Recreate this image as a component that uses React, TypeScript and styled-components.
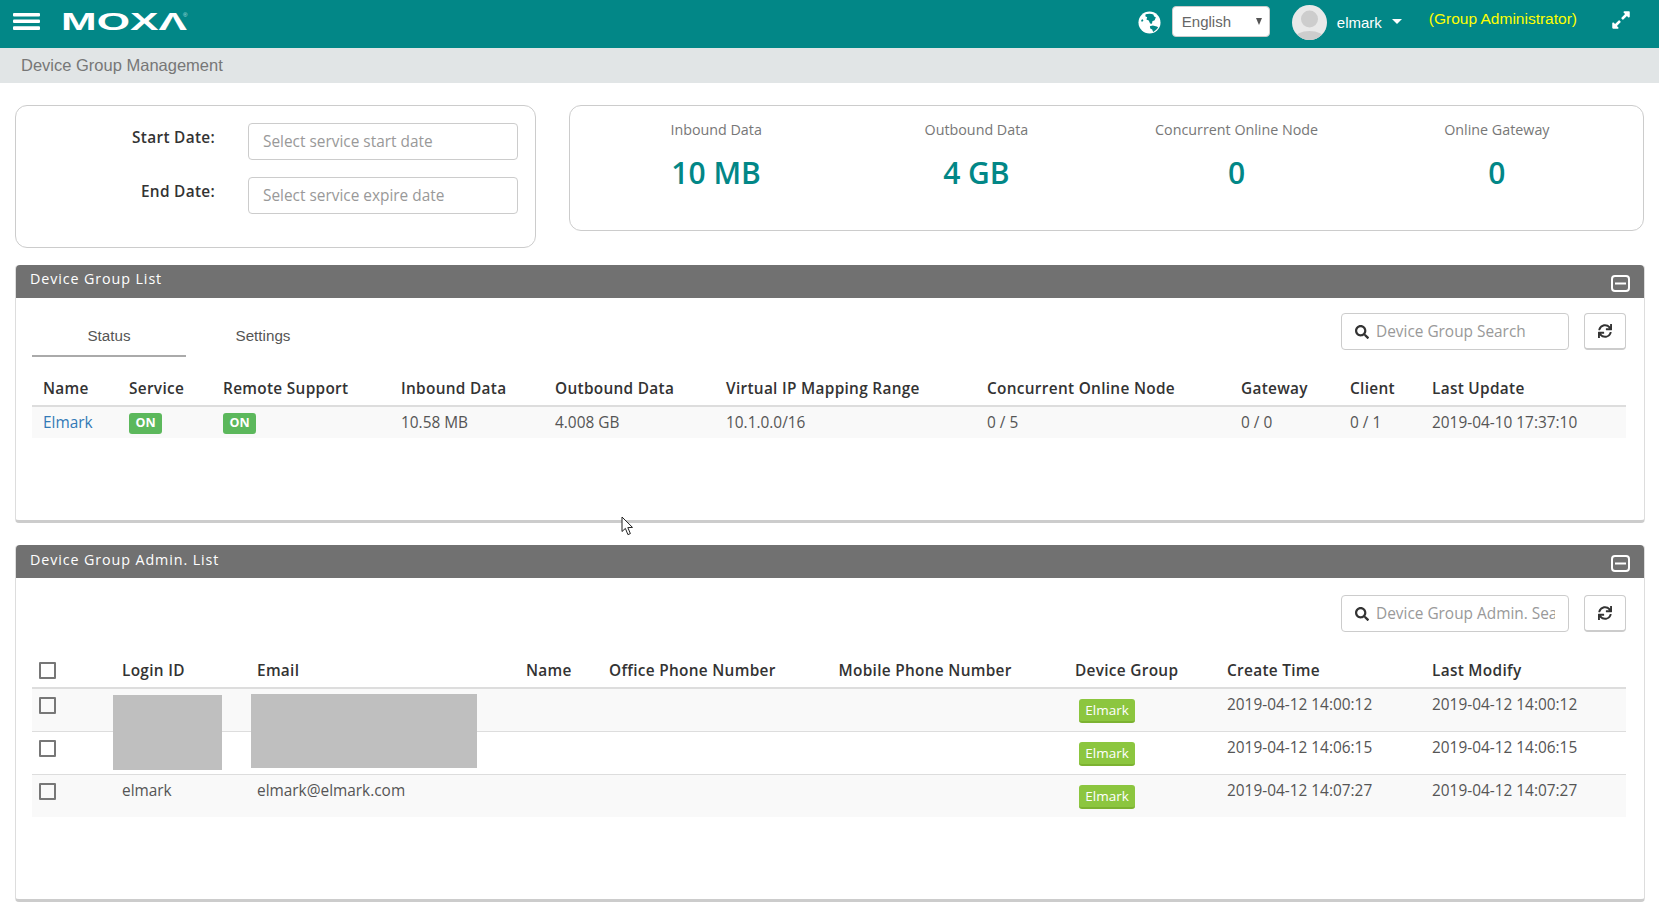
import styled, { createGlobalStyle } from 'styled-components'
import { FaExpandAlt, FaSearch, FaSync } from 'react-icons/fa'

const teal = '#028787'
const sans = '"Open Sans", "Liberation Sans", sans-serif'
const arial = '"Liberation Sans", Arial, sans-serif'

const GlobalStyle = createGlobalStyle`
    html, body {
        margin: 0;
        padding: 0;
        background: #fff;
        font-family: ${sans};
        overflow: hidden;
    }
`

const statusColumns = [86, 94, 178, 154, 171, 261, 254, 109, 82, 205]
const adminColumns = [79, 135, 269, 83, 229.5, 236.5, 152, 205, 205]

const stats = [
    { label: 'Inbound Data', value: '10 MB' },
    { label: 'Outbound Data', value: '4 GB' },
    { label: 'Concurrent Online Node', value: '0' },
    { label: 'Online Gateway', value: '0' },
]

const admins = [
    { login: '', email: '', created: '2019-04-12 14:00:12' },
    { login: '', email: '', created: '2019-04-12 14:06:15' },
    { login: 'elmark', email: 'elmark@elmark.com', created: '2019-04-12 14:07:27' },
]

function MenuIcon() {
    return (
        <MenuSvg viewBox="0 0 27 18">
            <rect y="0" width="27" height="3.6" rx="1" fill="#fff" />
            <rect y="6.4" width="27" height="3.6" rx="1" fill="#fff" />
            <rect y="13.2" width="27" height="3.8" rx="1" fill="#fff" />
        </MenuSvg>
    )
}

function MoxaLogo() {
    return (
        <LogoSvg viewBox="0 0 130 30" aria-label="MOXA">
            <text x="0" y="21" fill="#fff" fontFamily={arial} fontWeight="700" fontSize="24" textLength="126" lengthAdjust="spacingAndGlyphs">MOXΛ</text>
            <text x="122" y="8" fill="#bfe0e0" fontFamily={arial} fontSize="6">®</text>
        </LogoSvg>
    )
}

function GlobeIcon() {
    return (
        <GlobeSvg viewBox="0 0 24 24">
            <circle cx="12" cy="12" r="11.5" fill="#fff" />
            <path d="M8 3.5 C10.5 2.6 14 2.6 16 3.6 L16.8 5.8 L18.6 6.6 L17.4 9.6 L15 10.6 L14.6 13.4 L12.6 13 L11.2 9.8 L8.8 8.8 L9.6 6.6 L7.6 5.4 Z" fill={teal} />
            <path d="M12.4 16 L15.4 15.2 L19.6 16.2 L21 17 C19.8 19 17.8 20.8 15.8 21.8 L14.8 19.4 L12.8 18.2 Z" fill={teal} />
            <path d="M3.2 9.4 L5 8.6 L5.6 10.2 L4 11.6 Z" fill={teal} />
        </GlobeSvg>
    )
}

function Avatar() {
    return (
        <AvatarSvg viewBox="0 0 35 35">
            <defs>
                <clipPath id="avatar-clip"><circle cx="17.5" cy="17.5" r="17.5" /></clipPath>
            </defs>
            <g clipPath="url(#avatar-clip)">
                <rect width="35" height="35" fill="#e9e9e9" />
                <circle cx="17.5" cy="14" r="8.5" fill="#cdcdcd" />
                <ellipse cx="17.5" cy="34" rx="15" ry="8" fill="#cdcdcd" />
            </g>
        </AvatarSvg>
    )
}

function CollapseIcon() {
    return (
        <CollapseSvg viewBox="0 0 19 17">
            <rect x="1" y="1" width="17" height="15" rx="3" fill="none" stroke="#fff" strokeWidth="2" />
            <rect x="4" y="7.5" width="11" height="2" fill="#fff" />
        </CollapseSvg>
    )
}

function MouseCursor() {
    return (
        <CursorSvg viewBox="0 0 13 20">
            <path d="M1 1 L1 15.5 L4.4 12.4 L6.9 18.6 L9.4 17.6 L6.8 11.6 L11.5 11.4 Z" fill="#fff" stroke="#222" strokeWidth="1" strokeLinejoin="round" />
        </CursorSvg>
    )
}

function SearchTools({ placeholder }: { placeholder: string }) {
    return (
        <Tools>
            <SearchBox>
                <FaSearch size={14} color="#333" />
                <SearchInput placeholder={placeholder} />
            </SearchBox>
            <RefreshButton><FaSync size={14} color="#333" /></RefreshButton>
        </Tools>
    )
}

export default function App() {
    return (
        <>
            <GlobalStyle />
            <TopBar>
                <MenuIcon />
                <MoxaLogo />
                <TopRight>
                    <GlobeIcon />
                    <LanguageSelect>English<SelectArrow /></LanguageSelect>
                    <Avatar />
                    <UserName>elmark</UserName>
                    <UserCaret />
                    <RoleText>(Group Administrator)</RoleText>
                    <ExpandIcon><FaExpandAlt size={20} /></ExpandIcon>
                </TopRight>
            </TopBar>
            <Breadcrumb>Device Group Management</Breadcrumb>
            <Content>
                <TopCards>
                    <DateCard>
                        <DateLabel>Start Date:</DateLabel>
                        <DateInput placeholder="Select service start date" />
                        <DateLabel>End Date:</DateLabel>
                        <DateInput placeholder="Select service expire date" />
                    </DateCard>
                    <StatsCard>
                        {stats.map((stat) => (
                            <Stat key={stat.label}>
                                <StatLabel>{stat.label}</StatLabel>
                                <StatValue>{stat.value}</StatValue>
                            </Stat>
                        ))}
                    </StatsCard>
                </TopCards>

                <Panel $height={258}>
                    <PanelHeader>
                        <PanelTitle>Device Group List</PanelTitle>
                        <CollapseIcon />
                    </PanelHeader>
                    <PanelBody $top={15}>
                        <Toolbar>
                            <Tabs>
                                <Tab $active>Status</Tab>
                                <Tab>Settings</Tab>
                            </Tabs>
                            <SearchTools placeholder="Device Group Search" />
                        </Toolbar>
                        <Table>
                            <colgroup>{statusColumns.map((w, i) => <Col key={i} $w={w} />)}</colgroup>
                            <thead>
                                <tr>
                                    <Th>Name</Th>
                                    <Th>Service</Th>
                                    <Th>Remote Support</Th>
                                    <Th>Inbound Data</Th>
                                    <Th>Outbound Data</Th>
                                    <Th>Virtual IP Mapping Range</Th>
                                    <Th>Concurrent Online Node</Th>
                                    <Th>Gateway</Th>
                                    <Th>Client</Th>
                                    <Th>Last Update</Th>
                                </tr>
                            </thead>
                            <tbody>
                                <StatusRow>
                                    <Td><NameLink>Elmark</NameLink></Td>
                                    <Td><OnBadge>ON</OnBadge></Td>
                                    <Td><OnBadge>ON</OnBadge></Td>
                                    <Td>10.58 MB</Td>
                                    <Td>4.008 GB</Td>
                                    <Td>10.1.0.0/16</Td>
                                    <Td>0 / 5</Td>
                                    <Td>0 / 0</Td>
                                    <Td>0 / 1</Td>
                                    <Td>2019-04-10 17:37:10</Td>
                                </StatusRow>
                            </tbody>
                        </Table>
                    </PanelBody>
                    <MouseCursor />
                </Panel>

                <Panel $height={357}>
                    <PanelHeader>
                        <PanelTitle $drop>Device Group Admin. List</PanelTitle>
                        <CollapseIcon />
                    </PanelHeader>
                    <PanelBody $top={17}>
                        <Toolbar>
                            <span />
                            <SearchTools placeholder="Device Group Admin. Search" />
                        </Toolbar>
                        <TableWrap>
                            <Table>
                                <colgroup>{adminColumns.map((w, i) => <Col key={i} $w={w} />)}</colgroup>
                                <thead>
                                    <tr>
                                        <Th><HeadCheckBox /></Th>
                                        <Th>Login ID</Th>
                                        <Th>Email</Th>
                                        <Th>Name</Th>
                                        <Th>Office Phone Number</Th>
                                        <Th>Mobile Phone Number</Th>
                                        <Th>Device Group</Th>
                                        <Th>Create Time</Th>
                                        <Th>Last Modify</Th>
                                    </tr>
                                </thead>
                                <tbody>
                                    {admins.map((admin) => (
                                        <AdminRow key={admin.created}>
                                            <AdminTd><CheckBox /></AdminTd>
                                            <AdminTd>{admin.login}</AdminTd>
                                            <AdminTd>{admin.email}</AdminTd>
                                            <AdminTd />
                                            <AdminTd />
                                            <AdminTd />
                                            <AdminTd><GroupTag>Elmark</GroupTag></AdminTd>
                                            <AdminTd>{admin.created}</AdminTd>
                                            <AdminTd>{admin.created}</AdminTd>
                                        </AdminRow>
                                    ))}
                                </tbody>
                            </Table>
                            <Redaction $left={81} $top={41} $w={109} $h={75} />
                            <Redaction $left={219} $top={40} $w={226} $h={74} />
                        </TableWrap>
                    </PanelBody>
                </Panel>
            </Content>
        </>
    )
}

const TopBar = styled.header`
    display: flex;
    align-items: center;
    height: 48px;
    background: ${teal};
    color: #fff;
`

const MenuSvg = styled.svg`
    width: 27px;
    height: 18px;
    margin: -4px 0 0 13px;
`

const LogoSvg = styled.svg`
    width: 130px;
    height: 30px;
    margin-left: 21px;
`

const TopRight = styled.div`
    display: flex;
    align-items: center;
    margin: 0 0 4px auto;
`

const GlobeSvg = styled.svg`
    width: 23px;
    height: 23px;
    margin-right: 11px;
`

const LanguageSelect = styled.div`
    position: relative;
    display: flex;
    align-items: center;
    box-sizing: border-box;
    width: 98px;
    height: 31px;
    margin-top: -1px;
    padding-left: 9px;
    background: #fff;
    border: 1px solid #ccc;
    border-radius: 4px;
    color: #666;
    font: 15px ${arial};
`

const SelectArrow = styled.span`
    position: absolute;
    right: 7px;
    top: 11px;
    width: 0;
    height: 0;
    border-left: 3px solid transparent;
    border-right: 3px solid transparent;
    border-top: 7px solid #555;
`

const AvatarSvg = styled.svg`
    width: 35px;
    height: 35px;
    margin: 1px 0 0 22px;
`

const UserName = styled.span`
    margin: 0 0 0 10px;
    font: 15px ${arial};
`

const UserCaret = styled.span`
    width: 0;
    height: 0;
    margin: -2px 27px 0 10px;
    border-left: 5px solid transparent;
    border-right: 5px solid transparent;
    border-top: 5px solid #fff;
`

const RoleText = styled.span`
    margin-top: -6px;
    color: #ff0;
    font: 15.5px ${arial};
`

const ExpandIcon = styled.div`
    display: flex;
    margin: -5px 28px 0 34px;
    color: #fff;
`

const Breadcrumb = styled.div`
    box-sizing: border-box;
    height: 35px;
    padding: 7px 0 0 21px;
    background: #e1e5e6;
    color: #777;
    font: 16.5px/20px ${arial};
`

const Content = styled.main`
    padding: 22px 15px 0;
`

const TopCards = styled.div`
    display: flex;
    align-items: flex-start;
    gap: 33px;
    margin-bottom: 17px;
`

const DateCard = styled.section`
    display: grid;
    grid-template-columns: 199px 270px;
    column-gap: 33px;
    row-gap: 17px;
    box-sizing: border-box;
    width: 521px;
    height: 143px;
    padding-top: 17px;
    border: 1px solid #ccc;
    border-radius: 12px;
    align-content: start;
`

const DateLabel = styled.label`
    padding-top: 5px;
    color: #333;
    font-size: 15.4px;
    font-weight: 600;
    letter-spacing: 0.3px;
    line-height: 20px;
    text-align: right;
`

const DateInput = styled.input`
    box-sizing: border-box;
    width: 270px;
    height: 37px;
    padding: 0 14px;
    border: 1px solid #ccc;
    border-radius: 4px;
    font-family: ${sans};
    font-size: 15.4px;
    outline: none;

    &::placeholder {
        color: #999;
        opacity: 1;
    }
`

const StatsCard = styled.section`
    flex: 1;
    display: grid;
    grid-template-columns: repeat(4, 1fr);
    box-sizing: border-box;
    height: 126px;
    padding: 0 16px;
    border: 1px solid #ccc;
    border-radius: 12px;
`

const Stat = styled.div`
    text-align: center;
`

const StatLabel = styled.div`
    margin-top: 14px;
    color: #777;
    font-size: 14.3px;
    line-height: 20px;
`

const StatValue = styled.div`
    margin-top: 13px;
    color: ${teal};
    font-size: 30px;
    font-weight: 600;
    line-height: 40px;
`

const Panel = styled.section<{ $height: number }>`
    position: relative;
    box-sizing: border-box;
    height: ${(props) => props.$height}px;
    margin: 0 -1px 22px 0;
    border: 1px solid #ddd;
    border-top: none;
    border-bottom: 3px solid #ccc;
    border-radius: 4px;
`

const PanelHeader = styled.div`
    display: flex;
    align-items: flex-start;
    justify-content: space-between;
    box-sizing: border-box;
    height: 33px;
    padding: 3px 14px 0 14px;
    background: #717171;
    border-radius: 4px 4px 0 0;
`

const PanelTitle = styled.h2<{ $drop?: boolean }>`
    margin: ${(props) => (props.$drop ? '1px' : '0')} 0 0;
    color: #fff;
    font-size: 14.3px;
    font-weight: 400;
    letter-spacing: 0.9px;
    line-height: 22px;
`

const CollapseSvg = styled.svg`
    width: 19px;
    height: 17px;
    margin-top: 7px;
`

const PanelBody = styled.div<{ $top: number }>`
    padding: ${(props) => props.$top}px 16px 0;
`

const Toolbar = styled.div`
    display: flex;
    align-items: flex-start;
    justify-content: space-between;
    width: 1594px;
    height: 44px;
    margin-bottom: 15px;
`

const Tabs = styled.div`
    display: flex;
`

const Tab = styled.div<{ $active?: boolean }>`
    box-sizing: border-box;
    width: 154px;
    height: 44px;
    padding-top: 13px;
    border-bottom: 2px solid ${(props) => (props.$active ? '#aaa' : 'transparent')};
    color: #555;
    font: 15.2px/20px ${arial};
    text-align: center;
`

const Tools = styled.div`
    display: flex;
    align-items: flex-start;
    gap: 15px;
`

const SearchBox = styled.div`
    display: flex;
    align-items: center;
    box-sizing: border-box;
    width: 228px;
    height: 37px;
    padding-left: 13px;
    border: 1px solid #ccc;
    border-radius: 4px;
`

const SearchInput = styled.input`
    width: 179px;
    margin-left: 7px;
    padding: 0;
    border: none;
    color: #555;
    font-family: ${sans};
    font-size: 15.4px;
    outline: none;

    &::placeholder {
        color: #999;
        opacity: 1;
    }
`

const RefreshButton = styled.div`
    display: flex;
    align-items: center;
    justify-content: center;
    box-sizing: border-box;
    width: 42px;
    height: 37px;
    border: 1px solid #ccc;
    border-bottom-width: 2px;
    border-radius: 4px;
`

const TableWrap = styled.div`
    position: relative;
`

const Table = styled.table`
    width: 1594px;
    border-collapse: collapse;
    table-layout: fixed;
    color: #555;
    font-size: 15.4px;
`

const Col = styled.col<{ $w: number }>`
    width: ${(props) => props.$w}px;
`

const Th = styled.th`
    box-sizing: border-box;
    height: 34px;
    padding: 0 0 0 11px;
    border-bottom: 2px solid #ddd;
    color: #333;
    font-weight: 600;
    letter-spacing: 0.3px;
    line-height: 20px;
    text-align: left;
    white-space: nowrap;
    vertical-align: middle;
`

const StatusRow = styled.tr`
    height: 32px;
    background: #f9f9f9;
`

const Td = styled.td`
    padding: 0 0 0 11px;
    vertical-align: middle;
    white-space: nowrap;
`

const NameLink = styled.a`
    color: #337ab7;
`

const OnBadge = styled.span`
    display: inline-block;
    width: 33px;
    height: 21px;
    background: #5cb85c;
    border-radius: 3px;
    color: #fff;
    font-size: 12.5px;
    font-weight: 700;
    line-height: 20px;
    text-align: center;
    vertical-align: middle;
`

const AdminRow = styled.tr`
    height: 43px;
    border-bottom: 1px solid #ddd;

    &:nth-child(odd) {
        background: #f9f9f9;
    }

    &:last-child {
        border-bottom: none;
    }
`

const AdminTd = styled.td`
    height: 42px;
    box-sizing: border-box;
    padding: 6px 0 0 11px;
    line-height: 20px;
    vertical-align: top;
    white-space: nowrap;
`

const CheckBox = styled.span`
    display: inline-block;
    box-sizing: border-box;
    width: 17px;
    height: 17px;
    margin-left: -4px;
    border: 2px solid #777;
    border-radius: 1px;
    vertical-align: middle;
`

const HeadCheckBox = styled(CheckBox)`
    margin-bottom: 2px;
`

const GroupTag = styled.span`
    display: inline-block;
    box-sizing: border-box;
    width: 56px;
    height: 24px;
    margin: 4px 0 0 4px;
    background: #8cc63f;
    border-bottom: 2px solid #7cb231;
    border-radius: 3px;
    color: #fff;
    font-size: 13.5px;
    line-height: 22px;
    text-align: center;
`

const Redaction = styled.div<{ $left: number; $top: number; $w: number; $h: number }>`
    position: absolute;
    left: ${(props) => props.$left}px;
    top: ${(props) => props.$top}px;
    width: ${(props) => props.$w}px;
    height: ${(props) => props.$h}px;
    background: #bfbfbf;
`

const CursorSvg = styled.svg`
    position: absolute;
    left: 605px;
    top: 251px;
    width: 13px;
    height: 20px;
`
